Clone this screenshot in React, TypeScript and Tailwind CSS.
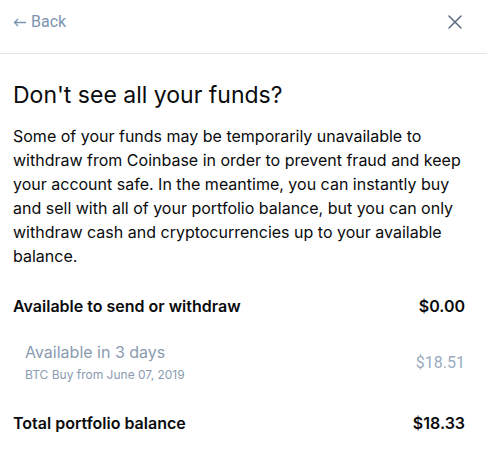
import { X } from 'lucide-react';

export default function App() {
  return (
    <div className="w-[487px] h-[452px] bg-white overflow-hidden">
      {/* Header */}
      <div className="flex items-center justify-between pt-[10px] pb-[19px] pl-[13px] pr-[20px] border-b border-[#dfe4ec]">
        <button className="flex items-center gap-[5px] h-[24px] text-[16px] text-[#7b94b1] font-['Roboto',sans-serif]">
          <svg width="13" height="10" viewBox="0 0 13 10" fill="none" stroke="currentColor" strokeWidth="1.3">
            <path d="M13 5.5H1.5M5 2L1.5 5.5L5 9" />
          </svg>
          <span>Back</span>
        </button>
        <X size={24} strokeWidth={1.5} className="text-[#5b6c80]" />
      </div>

      <div className="pl-[13px] pr-[22px] font-['Inter',sans-serif] text-[#0a0b0d]">
        <h1 className="mt-[25px] text-[23px] leading-[32px] font-normal">Don't see all your funds?</h1>
        <p className="mt-[13px] text-[16px] leading-[24px]">
          Some of your funds may be temporarily unavailable to withdraw from Coinbase in order to prevent fraud and keep
          your account safe. In the meantime, you can instantly buy and sell with all of your portfolio balance, but you
          can only withdraw cash and cryptocurrencies up to your available balance.
        </p>

        <div className="mt-[26px] flex items-center justify-between text-[16px] leading-[24px] font-semibold">
          <span>Available to send or withdraw</span>
          <span>$0.00</span>
        </div>

        <div className="mt-[22px] pl-[12px] flex items-center justify-between">
          <div>
            <div className="text-[16px] leading-[24px] text-[#8a9bb0]">Available in 3 days</div>
            <div className="mt-[1px] text-[12px] leading-[20px] text-[#8a9bb0]">BTC Buy from June 07, 2019</div>
          </div>
          <span className="text-[16px] text-[#9aabbf] font-['Roboto',sans-serif]">$18.51</span>
        </div>

        <div className="mt-[26px] flex items-center justify-between text-[16px] leading-[24px] font-semibold">
          <span>Total portfolio balance</span>
          <span>$18.33</span>
        </div>
      </div>
    </div>
  );
}
